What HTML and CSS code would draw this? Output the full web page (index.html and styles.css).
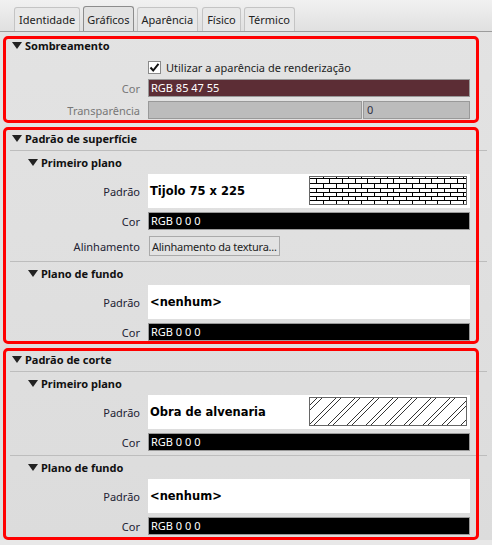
FILE: index.html

```html
<!DOCTYPE html>
<html lang="pt">
<head>
  <meta charset="UTF-8" />
  <title>Propriedades do material</title>
  <link rel="stylesheet" href="styles.css">
</head>
<body>

  <nav class="tabs">
    <button class="tab">Identidade</button>
    <button class="tab active">Gráficos</button>
    <button class="tab">Aparência</button>
    <button class="tab wide">Físico</button>
    <button class="tab">Térmico</button>
  </nav>

  <section class="group group-shading">
    <h2 class="head"><span class="arrow"></span>Sombreamento</h2>
    <div class="row check-row">
      <label class="check"><span class="box"><svg width="11" height="11" viewBox="0 0 11 11"><path d="M1.5 5.5 4.2 8.5 9.5 1.8" fill="none" stroke="#111" stroke-width="2"/></svg></span>Utilizar a aparência de renderização</label>
    </div>
    <div class="row">
      <span class="label muted">Cor</span>
      <div class="swatch shade">RGB 85 47 55</div>
    </div>
    <div class="row">
      <span class="label muted">Transparência</span>
      <div class="slider"></div>
      <div class="number">0</div>
    </div>
  </section>

  <section class="group group-surface">
    <h2 class="head ruled"><span class="arrow"></span>Padrão de superfície</h2>
    <h3 class="sub"><span class="arrow"></span>Primeiro plano</h3>
    <div class="row first">
      <span class="label">Padrão</span>
      <div class="pattern">
        <span>Tijolo 75 x 225</span>
        <svg class="preview" width="158" height="29" shape-rendering="crispEdges">
          <path d="M0 2.5H158M0 7.5H158M0 12.5H158M0 16.5H158M0 20.5H158M0 24.5H158" stroke="#000"/>
          <path d="M7.5 0V28M20.5 0V28M33.5 0V28M46.5 0V28M58.5 0V28M71.5 0V28M84.5 0V28M97.5 0V28M110.5 0V28M122.5 0V28M135.5 0V28M148.5 0V28" stroke="#000" stroke-dasharray="0 2 5 5 4 4 4 4"/>
          <path d="M14.5 0V28M27.5 0V28M39.5 0V28M52.5 0V28M65.5 0V28M78.5 0V28M90.5 0V28M103.5 0V28M116.5 0V28M128.5 0V28M141.5 0V28M154.5 0V28" stroke="#000" stroke-dasharray="2 5 5 4 4 4 4 0"/>
          <rect x=".5" y=".5" width="157" height="28" fill="none" stroke="#666"/>
        </svg>
      </div>
    </div>
    <div class="row">
      <span class="label">Cor</span>
      <div class="swatch">RGB 0 0 0</div>
    </div>
    <div class="row btn-row">
      <span class="label">Alinhamento</span>
      <button class="btn">Alinhamento da textura...</button>
    </div>
    <h3 class="sub ruled-top"><span class="arrow"></span>Plano de fundo</h3>
    <div class="row first">
      <span class="label">Padrão</span>
      <div class="pattern"><span>&lt;nenhum&gt;</span></div>
    </div>
    <div class="row">
      <span class="label">Cor</span>
      <div class="swatch">RGB 0 0 0</div>
    </div>
  </section>

  <section class="group group-cut">
    <h2 class="head ruled"><span class="arrow"></span>Padrão de corte</h2>
    <h3 class="sub"><span class="arrow"></span>Primeiro plano</h3>
    <div class="row first">
      <span class="label">Padrão</span>
      <div class="pattern">
        <span>Obra de alvenaria</span>
        <svg class="preview" width="158" height="29">
          <path d="M9 0-20 29M14 0-15 29M28 0-1 29M33 0 4 29M47 0 18 29M52 0 23 29M66 0 37 29M71 0 42 29M85 0 56 29M90 0 61 29M104 0 75 29M109 0 80 29M123 0 94 29M128 0 99 29M142 0 113 29M147 0 118 29M161 0 132 29M166 0 137 29M180 0 151 29M185 0 156 29" stroke="#000" stroke-width=".8" fill="none"/>
          <rect x=".5" y=".5" width="157" height="28" fill="none" stroke="#666"/>
        </svg>
      </div>
    </div>
    <div class="row">
      <span class="label">Cor</span>
      <div class="swatch">RGB 0 0 0</div>
    </div>
    <h3 class="sub ruled-top near"><span class="arrow"></span>Plano de fundo</h3>
    <div class="row first">
      <span class="label">Padrão</span>
      <div class="pattern"><span>&lt;nenhum&gt;</span></div>
    </div>
    <div class="row">
      <span class="label">Cor</span>
      <div class="swatch">RGB 0 0 0</div>
    </div>
  </section>

</body>
</html>
```

FILE: styles.css

```css
* { box-sizing: border-box; margin: 0; padding: 0; }
body {
  width: 492px;
  height: 545px;
  overflow: hidden;
  background: linear-gradient(to bottom, #e3e3e3, #dcdcdc 540px, #e8e8e8 540px);
  font-family: "Noto Sans", sans-serif;
  font-size: 11px;
  color: #222;
}
.tabs {
  display: flex;
  gap: 3px;
  height: 32px;
  padding: 7px 0 0 14px;
  background: linear-gradient(to bottom, #f1f1f1, #e0e0e0);
  border-bottom: 1px solid #9c9c9c;
}
.tab {
  height: 24px;
  padding: 0 4px;
  font: inherit;
  color: #222;
  background: #e8e8e8;
  border: 1px solid #c4c4c4;
  border-bottom: none;
  border-radius: 3px 3px 0 0;
}
.tab.wide { margin-left: 1px; }
.tab.active {
  height: 25px;
  margin-top: -1px;
  padding: 0 3px;
  background: #e2e2e2;
  border-color: #8c8c8c;
}
.group {
  position: relative;
  padding-top: 5px;
}
/* destaque vermelho por cima do painel */
.group::after {
  content: "";
  position: absolute;
  left: 3px;
  right: 13px;
  top: 4px;
  bottom: 0;
  border: 3px solid #f00;
  border-radius: 5px;
  pointer-events: none;
}
.group-shading { height: 91px; padding-top: 4px; }
.group-surface { height: 221px; }
.group-cut { height: 196px; }
.head, .sub {
  display: flex;
  align-items: center;
  font-size: 11px;
  font-weight: bold;
  color: #111;
}
.head {
  height: 20px;
  padding: 0 0 2px 12px;
}
.head.ruled {
  width: 477px;
  height: 23px;
  margin-left: 10px;
  padding: 0 0 2px 2px;
  border-bottom: 1px solid #bdbdbd;
}
.sub {
  height: 23px;
  padding-left: 28px;
}
.sub.ruled-top {
  width: 477px;
  height: 24px;
  margin: 5px 0 0 10px;
  padding-left: 18px;
  border-top: 1px solid #bdbdbd;
}
.sub.near { margin-top: 4px; }
.arrow {
  width: 0;
  height: 0;
  margin-right: 3px;
  border-left: 5px solid transparent;
  border-right: 5px solid transparent;
  border-top: 7px solid #222;
}
.row {
  position: relative;
  display: flex;
  align-items: center;
  gap: 1px;
  margin-top: 4px;
  padding-left: 148px;
}
.row.first { margin-top: 0; }
.row.btn-row { margin-top: 6px; }
.label {
  position: absolute;
  left: 0;
  width: 140px;
  text-align: right;
  color: #223;
}
.label.muted { color: #777; }
.check-row { height: 16px; margin-top: 3px; }
.check {
  display: flex;
  align-items: center;
  gap: 5px;
}
.box {
  display: flex;
  align-items: center;
  justify-content: center;
  width: 13px;
  height: 13px;
  background: #fff;
  border: 1px solid #8a8a8a;
}
.swatch {
  width: 322px;
  height: 18px;
  line-height: 16px;
  padding-left: 2px;
  color: #fff;
  background: #000;
  border: 1px solid #999;
}
.swatch.shade { background: #5c2d35; }
.slider, .number {
  height: 18px;
  background: #bcbcbc;
  border: 1px solid #999;
}
.slider { width: 214px; }
.number { width: 107px; line-height: 16px; padding-left: 3px; color: #334; }
.pattern {
  display: flex;
  align-items: center;
  justify-content: space-between;
  width: 322px;
  height: 34px;
  padding: 0 3px 1px 2px;
  background: #fff;
  font-family: "DejaVu Sans", sans-serif;
  font-size: 11.5px;
  font-weight: bold;
  color: #000;
}
.preview { display: block; }
.btn {
  width: 131px;
  height: 20px;
  margin-left: 1px;
  padding: 0 2px;
  font: inherit;
  letter-spacing: -0.25px;
  white-space: nowrap;
  text-align: left;
  color: #222;
  background: #e2e2e2;
  border: 1px solid #aaa;
}
```
